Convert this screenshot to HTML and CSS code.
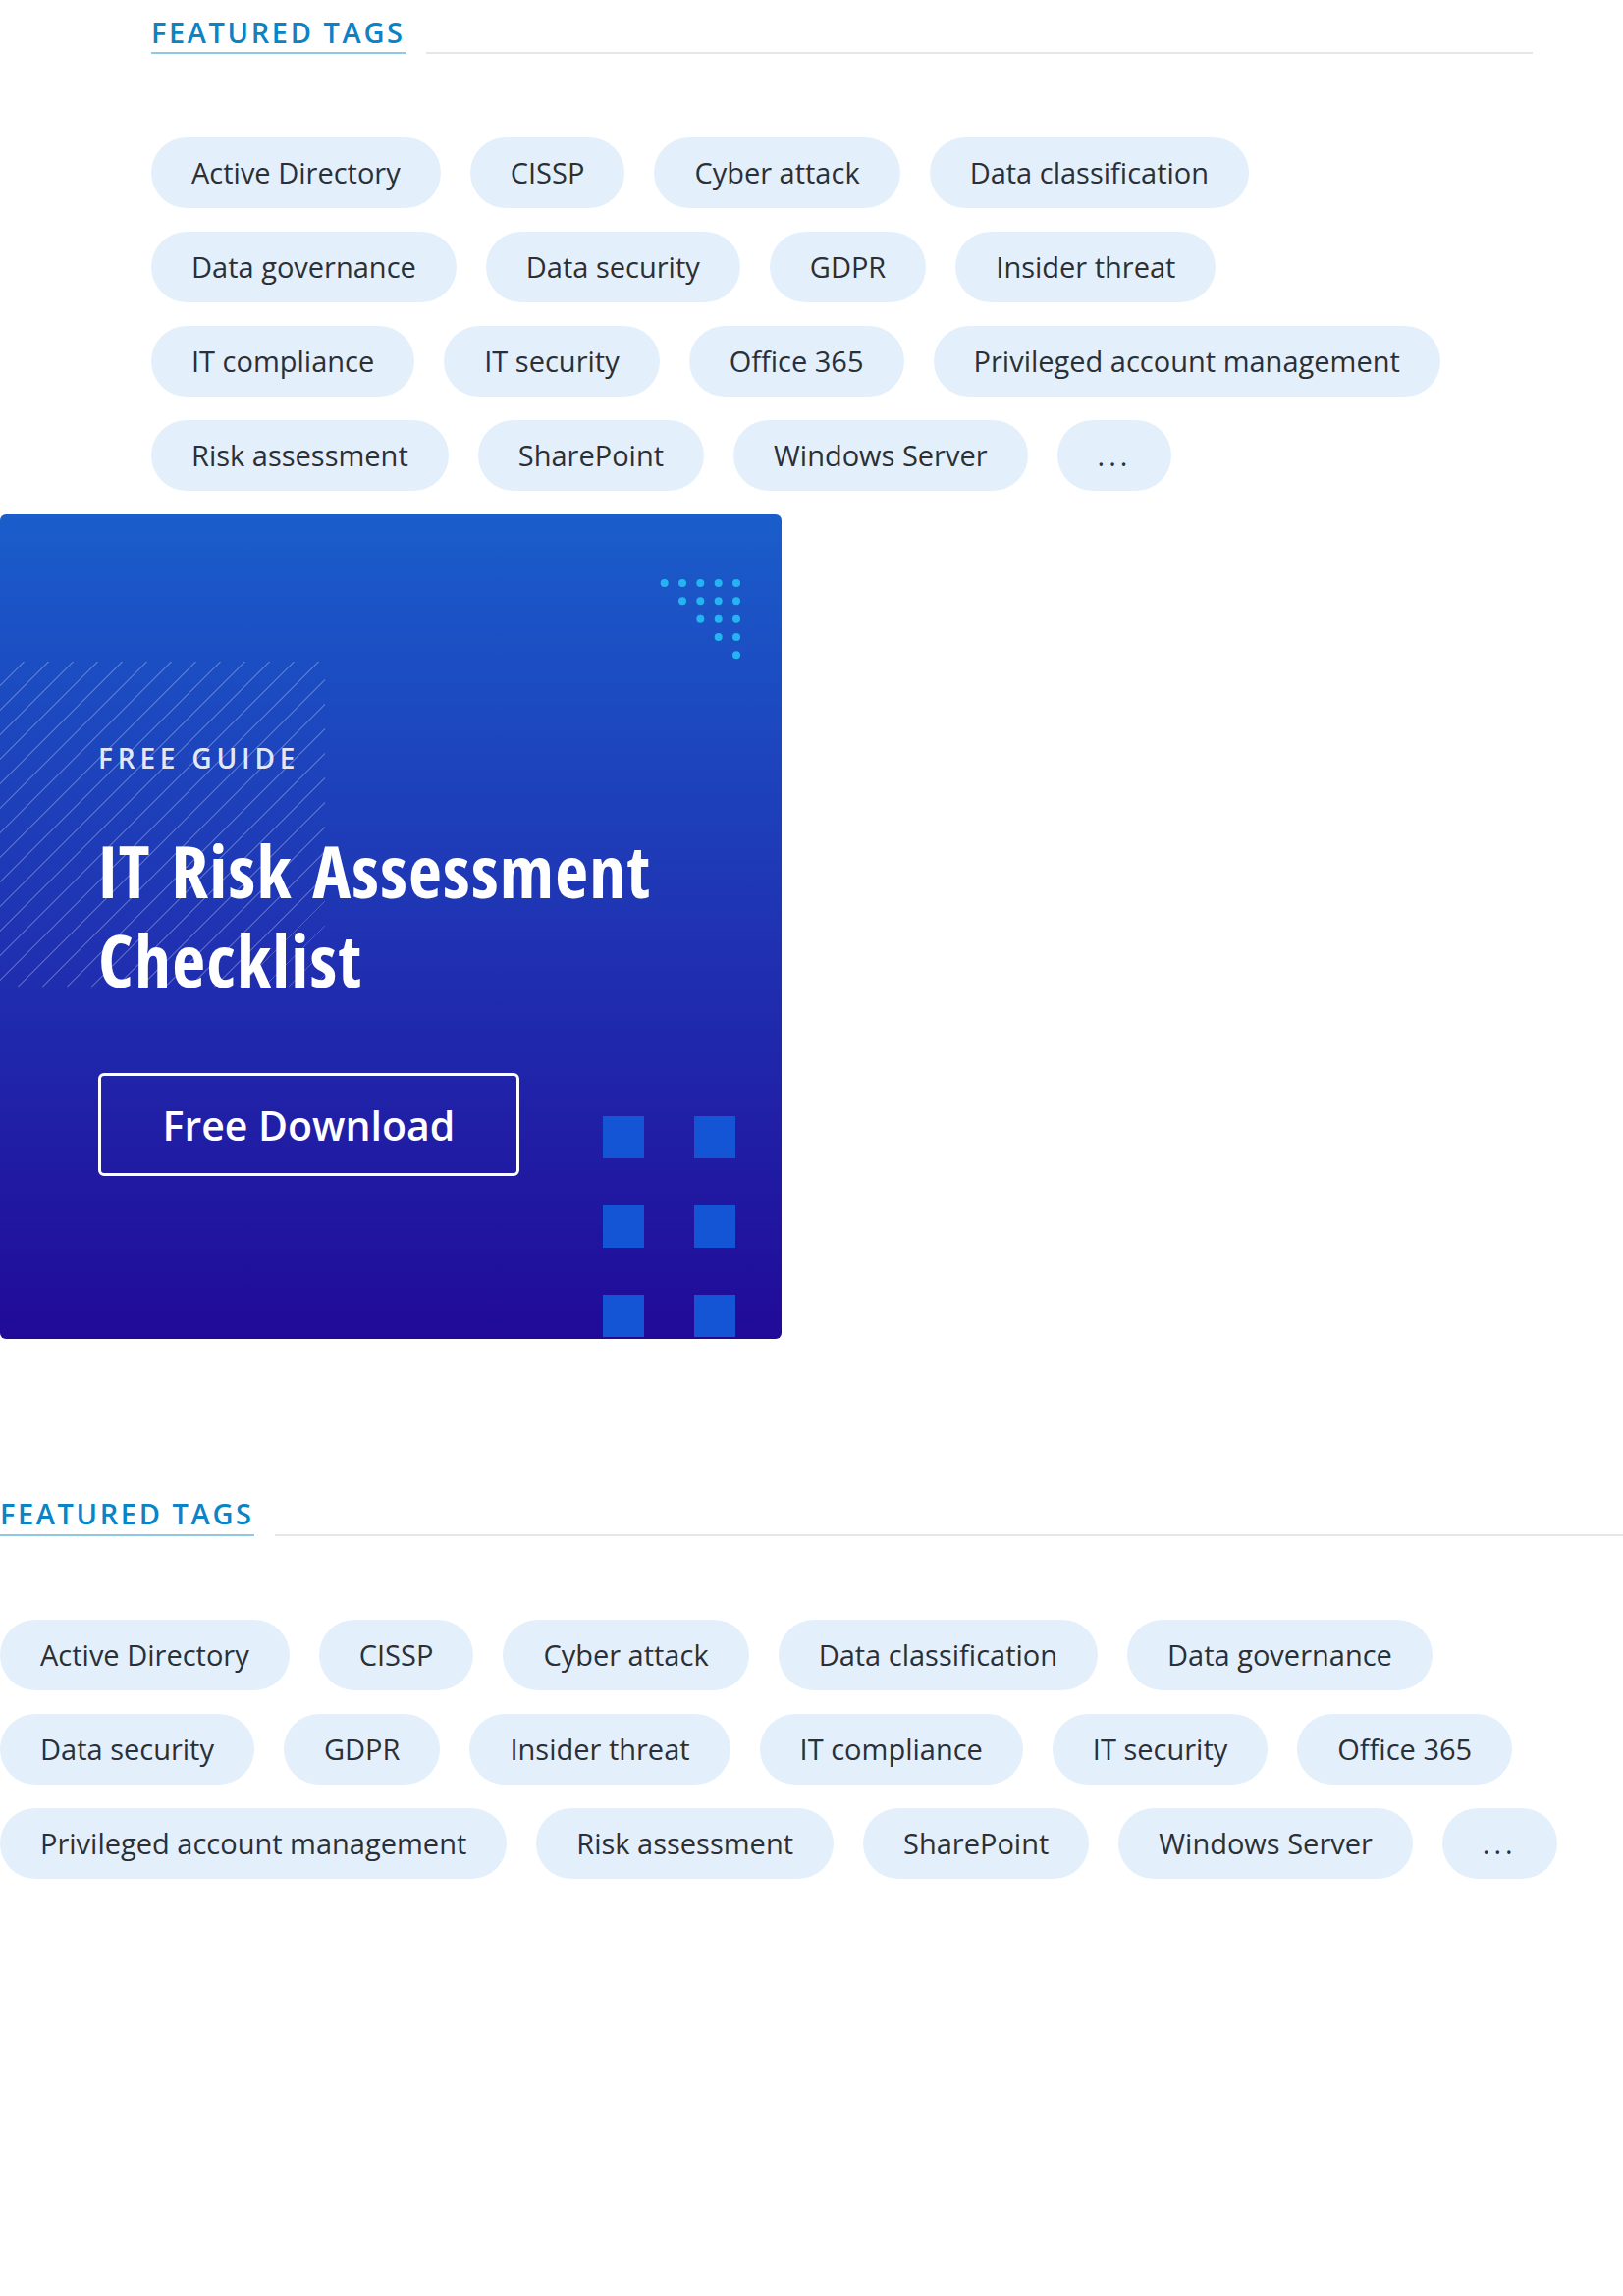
FILE: index.html
```html
<!DOCTYPE html>
<html lang="en">
<head>
<meta charset="utf-8">
<title>Featured tags</title>
<link rel="stylesheet" href="styles.css">
</head>
<body>
<section class="tags-section tags-section--inset">
  <div class="tags-head">
    <h2 class="tags-title">FEATURED TAGS</h2>
    <span class="tags-rule"></span>
  </div>
  <ul class="tag-list">
    <li class="tag">Active Directory</li>
    <li class="tag">CISSP</li>
    <li class="tag">Cyber attack</li>
    <li class="tag">Data classification</li>
    <li class="tag">Data governance</li>
    <li class="tag">Data security</li>
    <li class="tag">GDPR</li>
    <li class="tag">Insider threat</li>
    <li class="tag">IT compliance</li>
    <li class="tag">IT security</li>
    <li class="tag">Office 365</li>
    <li class="tag">Privileged account management</li>
    <li class="tag">Risk assessment</li>
    <li class="tag">SharePoint</li>
    <li class="tag">Windows Server</li>
    <li class="tag tag--more">...</li>
  </ul>
</section>

<aside class="promo">
  <div class="promo-hatch"></div>
  <svg class="promo-dots" viewBox="0 0 86 84" width="86" height="84" aria-hidden="true">
    <g fill="#23b4f1">
      <circle cx="6.7" cy="6" r="4"/><circle cx="25" cy="6" r="4"/><circle cx="43.3" cy="6" r="4"/><circle cx="61.7" cy="6" r="4"/><circle cx="80" cy="6" r="4"/>
      <circle cx="25" cy="24.3" r="4"/><circle cx="43.3" cy="24.3" r="4"/><circle cx="61.7" cy="24.3" r="4"/><circle cx="80" cy="24.3" r="4"/>
      <circle cx="43.3" cy="42.7" r="4"/><circle cx="61.7" cy="42.7" r="4"/><circle cx="80" cy="42.7" r="4"/>
      <circle cx="61.7" cy="61" r="4"/><circle cx="80" cy="61" r="4"/>
      <circle cx="80" cy="79.3" r="4"/>
    </g>
  </svg>
  <div class="promo-squares" aria-hidden="true">
    <span></span><span></span><span></span><span></span><span></span><span></span>
  </div>
  <p class="promo-eyebrow">FREE GUIDE</p>
  <h3 class="promo-title">IT Risk Assessment<br>Checklist</h3>
  <a class="promo-btn" href="#">Free Download</a>
</aside>

<section class="tags-section tags-section--full">
  <div class="tags-head">
    <h2 class="tags-title">FEATURED TAGS</h2>
    <span class="tags-rule"></span>
  </div>
  <ul class="tag-list">
    <li class="tag">Active Directory</li>
    <li class="tag">CISSP</li>
    <li class="tag">Cyber attack</li>
    <li class="tag">Data classification</li>
    <li class="tag">Data governance</li>
    <li class="tag">Data security</li>
    <li class="tag">GDPR</li>
    <li class="tag">Insider threat</li>
    <li class="tag">IT compliance</li>
    <li class="tag">IT security</li>
    <li class="tag">Office 365</li>
    <li class="tag">Privileged account management</li>
    <li class="tag">Risk assessment</li>
    <li class="tag">SharePoint</li>
    <li class="tag">Windows Server</li>
    <li class="tag tag--more">...</li>
  </ul>
</section>
</body>
</html>
```
FILE: styles.css
```css
html, body {
  margin: 0;
  padding: 0;
  background: #ffffff;
}

body {
  font-family: "Open Sans", "Noto Sans", "Liberation Sans", sans-serif;
  color: #2b2f36;
}

.tags-section--inset {
  padding: 17.5px 92px 0 154px;
}

.tags-section--full {
  margin-top: 145px;
  padding: 17.5px 0 0 0;
}

.tags-head {
  display: flex;
  align-items: flex-end;
}

.tags-title {
  margin: 0;
  font-size: 29px;
  line-height: 29px;
  font-weight: 600;
  letter-spacing: 2.6px;
  color: #0a84c6;
  padding-bottom: 6.8px;
  border-bottom: 2px solid #8ec8e6;
  white-space: nowrap;
}

.tags-rule {
  flex: 1;
  height: 2px;
  margin-left: 21px;
  background: #e6e6e6;
}

.tag-list {
  list-style: none;
  margin: 85px 0 0 0;
  padding: 0;
  display: flex;
  flex-wrap: wrap;
}

.tag {
  height: 72px;
  line-height: 72px;
  padding: 0 41px;
  margin: 0 30px 24px 0;
  border-radius: 36px;
  background: #e3f0fb;
  color: #2b2f36;
  font-size: 29px;
  white-space: nowrap;
}

.tag--more {
  letter-spacing: 4px;
}

.promo {
  position: relative;
  width: 796px;
  box-sizing: border-box;
  padding: 234px 0 166px 100px;
  border-radius: 6px;
  overflow: hidden;
  background: linear-gradient(180deg, #1a5dcb 0%, #1f33b3 50%, #210a98 100%);
  color: #ffffff;
}

.promo-hatch {
  position: absolute;
  left: 0;
  top: 150px;
  width: 331px;
  height: 331px;
  background: repeating-linear-gradient(135deg, transparent 0 16.5px, rgba(255, 255, 255, 0.22) 16.5px 17.7px);
}

.promo-dots {
  position: absolute;
  left: 670px;
  top: 64px;
}

.promo-squares {
  position: absolute;
  left: 613.5px;
  top: 612.7px;
  display: grid;
  grid-template-columns: 42.5px 42.5px;
  grid-auto-rows: 43.5px;
  column-gap: 50.5px;
  row-gap: 47.5px;
}

.promo-squares span {
  background: #1355d5;
}

.promo-eyebrow {
  position: relative;
  margin: 0;
  font-size: 28px;
  line-height: 28px;
  font-weight: 600;
  letter-spacing: 4.8px;
  color: rgba(255, 255, 255, 0.9);
}

.promo-title {
  position: relative;
  margin: 54.8px 0 0 0;
  font-size: 74px;
  line-height: 91px;
  font-weight: 700;
  font-stretch: 75%;
  letter-spacing: 1.2px;
  word-spacing: 6px;
  color: #ffffff;
}

.promo-btn {
  position: relative;
  margin-top: 69.7px;
  display: flex;
  align-items: center;
  justify-content: center;
  width: 429px;
  height: 105.5px;
  box-sizing: border-box;
  border: 3px solid #ffffff;
  border-radius: 6px;
  font-size: 41px;
  font-weight: 600;
  color: #ffffff;
  text-decoration: none;
}
```
